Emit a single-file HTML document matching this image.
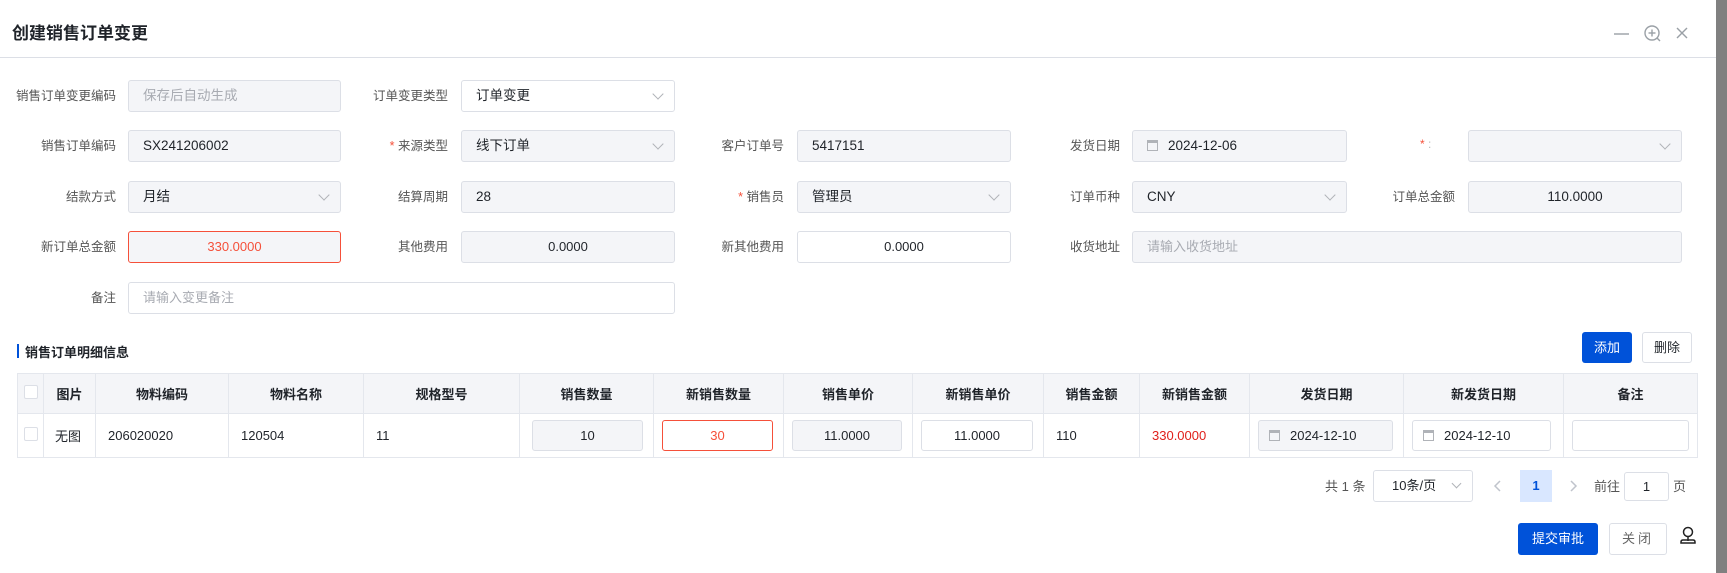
<!DOCTYPE html>
<html><head><meta charset="utf-8">
<style>
*{box-sizing:border-box;margin:0;padding:0}
html,body{width:1727px;height:573px;overflow:hidden}
body{background:#fff;font-family:"Liberation Sans","Noto Sans CJK SC",sans-serif;color:#1f2329;position:relative}
.ov{position:absolute;left:1716px;top:0;width:11px;height:573px;background:#808080}
.a{position:absolute}
.lbl{position:absolute;font-size:12.5px;color:#555;text-align:right;width:110px;line-height:32px}
.req:before{content:"* ";color:#f5503a}
.in{position:absolute;height:32px;border:1px solid #dcdfe6;border-radius:3px;background:#f4f5f8;font-size:13.5px;line-height:30px;padding-left:14px;color:#1f2329}
.w{background:#fff}
.ph{color:#a8abb2}
.c{text-align:center;padding-left:0}
.arr{position:absolute;right:12px;top:9px;width:8px;height:8px;border-right:1px solid #b0b3b8;border-bottom:1px solid #b0b3b8;transform:rotate(45deg)}
.cal{display:inline-block;width:11px;height:11px;border:1px solid #b0b3b8;border-top-width:3px;margin-right:10px;vertical-align:-1px}
table{position:absolute;left:17px;top:373px;border-collapse:collapse;font-size:13px}
td,th{border:1px solid #e4e7ed;height:40px;padding:0}
th{background:#f4f5f8;font-weight:bold;color:#1f2329;text-align:center}
tr.b td{height:44px}
td{padding-left:12px}
.ci{height:31px;border:1px solid #dcdfe6;border-radius:3px;line-height:29px;text-align:center;margin:0 10px 0 0;font-size:13px}
.btn{position:absolute;font-size:13px;text-align:center;border-radius:3px}
.cb{display:inline-block;width:14px;height:14px;border:1px solid #dcdfe6;border-radius:2px;background:#fff}
</style></head><body>
<div class="a" style="left:12px;top:19px;font-size:17px;font-weight:bold;color:#1f2329">创建销售订单变更</div>
<svg class="a" style="left:1610px;top:24px" width="90" height="20" viewBox="0 0 90 20" fill="none" stroke="#9aa0a6" stroke-width="1.4">
<line x1="4" y1="10" x2="19" y2="10"/>
<circle cx="42" cy="9" r="7"/><line x1="42" y1="5.5" x2="42" y2="12.5"/><line x1="38.5" y1="9" x2="45.5" y2="9"/><line x1="47" y1="14" x2="50" y2="17"/>
<line x1="67" y1="4" x2="77" y2="14"/><line x1="77" y1="4" x2="67" y2="14"/>
</svg>
<div class="a" style="left:0;top:57px;width:1716px;height:1px;background:#dcdfe6"></div>

<div class="lbl" style="left:6px;top:80px">销售订单变更编码</div>
<div class="in ph" style="left:128px;top:80px;width:213px">保存后自动生成</div>
<div class="lbl" style="left:338px;top:80px">订单变更类型</div>
<div class="in w" style="left:461px;top:80px;width:214px">订单变更<span class="arr"></span></div>

<div class="lbl" style="left:6px;top:130px">销售订单编码</div>
<div class="in" style="left:128px;top:130px;width:213px">SX241206002</div>
<div class="lbl req" style="left:338px;top:130px">来源类型</div>
<div class="in" style="left:461px;top:130px;width:214px">线下订单<span class="arr"></span></div>
<div class="lbl" style="left:674px;top:130px">客户订单号</div>
<div class="in" style="left:797px;top:130px;width:214px">5417151</div>
<div class="lbl" style="left:1010px;top:130px">发货日期</div>
<div class="in" style="left:1132px;top:130px;width:215px"><span class="cal"></span>2024-12-06</div>
<div class="a" style="left:1420px;top:137px;font-size:12px;color:#f5503a">* <span style="color:#bbb">:</span></div>
<div class="in" style="left:1468px;top:130px;width:214px"><span class="arr"></span></div>

<div class="lbl" style="left:6px;top:181px">结款方式</div>
<div class="in" style="left:128px;top:181px;width:213px">月结<span class="arr"></span></div>
<div class="lbl" style="left:338px;top:181px">结算周期</div>
<div class="in" style="left:461px;top:181px;width:214px">28</div>
<div class="lbl req" style="left:674px;top:181px">销售员</div>
<div class="in" style="left:797px;top:181px;width:214px">管理员<span class="arr"></span></div>
<div class="lbl" style="left:1010px;top:181px">订单币种</div>
<div class="in" style="left:1132px;top:181px;width:215px">CNY<span class="arr"></span></div>
<div class="lbl" style="left:1345px;top:181px">订单总金额</div>
<div class="in c" style="left:1468px;top:181px;width:214px">110.0000</div>

<div class="lbl" style="left:6px;top:231px">新订单总金额</div>
<div class="in c" style="left:128px;top:231px;width:213px;border-color:#f5503a;color:#f5503a;font-size:13px">330.0000</div>
<div class="lbl" style="left:338px;top:231px">其他费用</div>
<div class="in c" style="left:461px;top:231px;width:214px;font-size:13px">0.0000</div>
<div class="lbl" style="left:674px;top:231px">新其他费用</div>
<div class="in w c" style="left:797px;top:231px;width:214px;font-size:13px">0.0000</div>
<div class="lbl" style="left:1010px;top:231px">收货地址</div>
<div class="in ph" style="left:1132px;top:231px;width:550px;font-size:13px">请输入收货地址</div>

<div class="lbl" style="left:6px;top:282px">备注</div>
<div class="in w ph" style="left:128px;top:282px;width:547px;font-size:13px">请输入变更备注</div>

<div class="a" style="left:17px;top:344px;width:2px;height:14px;background:#0052d9"></div>
<div class="a" style="left:25px;top:342px;font-size:13px;font-weight:bold">销售订单明细信息</div>
<div class="btn" style="left:1582px;top:332px;width:50px;height:31px;line-height:31px;background:#0052d9;color:#fff">添加</div>
<div class="btn" style="left:1642px;top:332px;width:50px;height:31px;line-height:29px;border:1px solid #dcdfe6;color:#1f2329">删除</div>

<table>
<tr><th style="width:26px"><span class="cb"></span></th><th style="width:52px">图片</th><th style="width:133px">物料编码</th><th style="width:135px">物料名称</th><th style="width:156px">规格型号</th><th style="width:134px">销售数量</th><th style="width:130px">新销售数量</th><th style="width:129px">销售单价</th><th style="width:131px">新销售单价</th><th style="width:96px">销售金额</th><th style="width:110px">新销售金额</th><th style="width:154px">发货日期</th><th style="width:160px">新发货日期</th><th style="width:134px">备注</th></tr>
<tr class="b"><td style="padding-left:6px"><span class="cb"></span></td><td style="padding-left:11px">无图</td><td>206020020</td><td>120504</td><td>11</td>
<td><div class="ci" style="background:#f4f5f8">10</div></td>
<td style="padding-left:8px"><div class="ci" style="border-color:#f5503a;color:#f5503a">30</div></td>
<td style="padding-left:8px"><div class="ci" style="background:#f4f5f8">11.0000</div></td>
<td style="padding-left:8px"><div class="ci">11.0000</div></td>
<td>110</td><td style="color:#e0201b">330.0000</td>
<td style="padding-left:8px"><div class="ci" style="background:#f4f5f8;text-align:left;padding-left:10px"><span class="cal"></span>2024-12-10</div></td>
<td style="padding-left:8px"><div class="ci" style="text-align:left;padding-left:10px;margin-right:12px"><span class="cal"></span>2024-12-10</div></td>
<td style="padding-left:8px"><div class="ci" style="margin-right:8px"></div></td></tr>
</table>

<div class="a" style="left:1325px;top:476px;font-size:13px;color:#555">共 1 条</div>
<div class="in w" style="left:1373px;top:470px;width:100px;height:32px;font-size:13px;padding-left:18px">10条/页<span class="arr" style="width:7px;height:7px"></span></div>
<svg class="a" style="left:1492px;top:478px" width="12" height="16" viewBox="0 0 12 16" fill="none" stroke="#c0c4cc" stroke-width="1.5"><path d="M8 3 L3 8 L8 13"/></svg>
<div class="a" style="left:1520px;top:470px;width:32px;height:32px;background:#d9e7ff;color:#0052d9;font-size:13px;font-weight:bold;text-align:center;line-height:32px">1</div>
<svg class="a" style="left:1567px;top:478px" width="12" height="16" viewBox="0 0 12 16" fill="none" stroke="#c0c4cc" stroke-width="1.5"><path d="M4 3 L9 8 L4 13"/></svg>
<div class="a" style="left:1594px;top:476px;font-size:13px;color:#555">前往</div>
<div class="in w c" style="left:1624px;top:472px;width:45px;height:29px;line-height:27px;font-size:13px">1</div>
<div class="a" style="left:1673px;top:476px;font-size:13px;color:#555">页</div>

<div class="btn" style="left:1518px;top:523px;width:80px;height:32px;line-height:32px;background:#0052d9;color:#fff">提交审批</div>
<div class="btn" style="left:1609px;top:523px;width:58px;height:32px;line-height:30px;border:1px solid #dcdfe6;color:#666;letter-spacing:3px">关闭</div>
<svg class="a" style="left:1679px;top:526px" width="18" height="21" viewBox="0 0 18 21" fill="none" stroke="#222" stroke-width="1.5"><circle cx="9" cy="6" r="4.5"/><line x1="9" y1="10.5" x2="9" y2="15"/><path d="M4 14 H14 Q16 14 16 16 V17 H2 V16 Q2 14 4 14Z"/></svg>
<div class="ov"></div>
</body></html>
